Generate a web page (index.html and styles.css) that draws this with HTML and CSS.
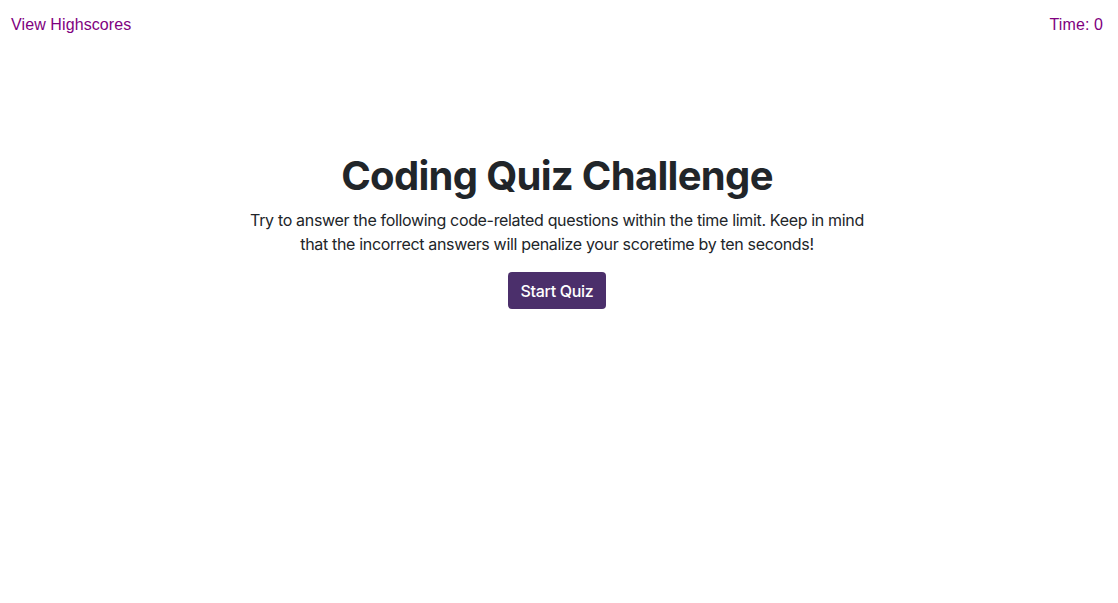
FILE: index.html
```html
<!DOCTYPE html>
<html>
<head>
<meta charset="utf-8">
<link rel="stylesheet" href="styles.css">
</head>
<body>
<header class="topbar">
  <a class="toplink" href="#">View Highscores</a>
  <span class="timer">Time: 0</span>
</header>
<main class="intro">
  <h1 class="title">Coding Quiz Challenge</h1>
  <p class="lead">Try to answer the following code-related questions within the time limit. Keep in mind that the incorrect answers will penalize your scoretime by ten seconds!</p>
  <button class="start">Start Quiz</button>
</main>
</body>
</html>
```
FILE: styles.css
```css
* { box-sizing: border-box; }
body {
  margin: 0;
  background: #fff;
  font-family: Inter, "Noto Sans", sans-serif;
  color: #212529;
}
.topbar {
  display: flex;
  justify-content: space-between;
  align-items: center;
  padding: 13px 15px 0 11px;
  height: 37px;
}
.toplink, .timer {
  font-family: "Liberation Sans", Arial, sans-serif;
  font-size: 16px;
  color: #800080;
  text-decoration: none;
  letter-spacing: 0.1px;
}
.intro {
  display: flex;
  flex-direction: column;
  align-items: center;
  padding-top: 115px;
  padding-right: 4px;
}
.title {
  margin: 0 0 8px;
  font-size: 40px;
  font-weight: 700;
  line-height: 48px;
  letter-spacing: -0.7px;
}
.lead {
  margin: 0 0 16px;
  width: 630px;
  text-align: center;
  font-size: 16px;
  line-height: 24px;
  letter-spacing: -0.33px;
  color: #212529;
}
.start {
  background: #4b2f6b;
  color: #fff;
  border: none;
  border-radius: 4px;
  font-family: Inter, "Noto Sans", sans-serif;
  font-size: 16px;
  font-weight: 500;
  letter-spacing: -0.3px;
  white-space: nowrap;
  padding: 0 12px;
  height: 37px;
  min-width: 98px;
}
```
